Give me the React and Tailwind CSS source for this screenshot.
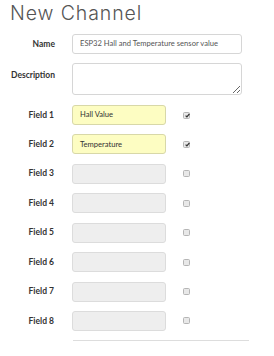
import React from "react";

function Check({ checked }) {
  return (
    <span className="relative inline-block w-[7px] h-[7px] rounded-[1.5px] border border-[#b5b5b5] bg-[#e8e8e8]">
      {checked && (
        <svg viewBox="0 0 7 7" className="absolute left-[-0.5px] top-[-0.5px] w-[7px] h-[7px]">
          <path d="M1.6 3.6 L2.9 4.9 L5.4 1.8" fill="none" stroke="#333" strokeWidth="1.3" />
        </svg>
      )}
    </span>
  );
}

export default function App() {
  const fields = [
    { n: 1, v: "Hall Value", on: true },
    { n: 2, v: "Temperature", on: true },
    { n: 3 }, { n: 4 }, { n: 5 }, { n: 6 }, { n: 7 }, { n: 8 },
  ];
  return (
    <div className="w-[274px] h-[356px] bg-white overflow-hidden" style={{ fontFamily: "Lato, 'Open Sans', sans-serif" }}>
      <h1 className="pl-[10px] pt-[1px] h-[30px] text-[19.5px] leading-[24px] font-light text-[#555]" style={{ fontFamily: "Inter, sans-serif", letterSpacing: "0.9px" }}>
        New Channel
      </h1>
      <div className="flex flex-col pt-[4px]">
        <div className="flex items-center h-[20px]">
          <div className="w-[55px] text-right text-[8.5px] font-bold text-[#333]">Name</div>
          <div className="ml-[17px] w-[170px] h-[20px] rounded-[3px] border border-[#d6d6d6] bg-white flex items-center pl-[7px] text-[7.6px] text-[#555]">
            ESP32 Hall and Temperature sensor value
          </div>
        </div>
        <div className="flex items-start h-[32px] mt-[9px]">
          <div className="w-[55px] text-right text-[8.5px] font-bold text-[#333] pt-[6px]">Description</div>
          <textarea readOnly className="ml-[17px] w-[170px] h-[32px] rounded-[3px] border border-[#d6d6d6] bg-white outline-none" />
        </div>
        <div className="flex flex-col gap-[9.43px] mt-[10px]">
          {fields.map((f) => (
            <div key={f.n} className="flex items-center h-[20px]">
              <div className="w-[55px] text-right text-[8.5px] font-bold text-[#333] pr-[1px]">Field {f.n}</div>
              <div
                className={
                  f.v
                    ? "ml-[17px] w-[94px] h-[20px] rounded-[3px] border border-[#d8d8a8] bg-[#fdfdc2] flex items-center pl-[7px] text-[7.6px] text-[#333]"
                    : "ml-[17px] w-[94px] h-[20px] rounded-[3px] border border-[#dcdcdc] bg-[#eeeeee]"
                }
              >
                {f.v}
              </div>
              <div className="ml-[17px] flex items-center">
                <Check checked={f.on} />
              </div>
            </div>
          ))}
        </div>
        <div className="ml-[73px] mt-[9px] w-[176px] h-px bg-[#dddddd]" />
      </div>
    </div>
  );
}
